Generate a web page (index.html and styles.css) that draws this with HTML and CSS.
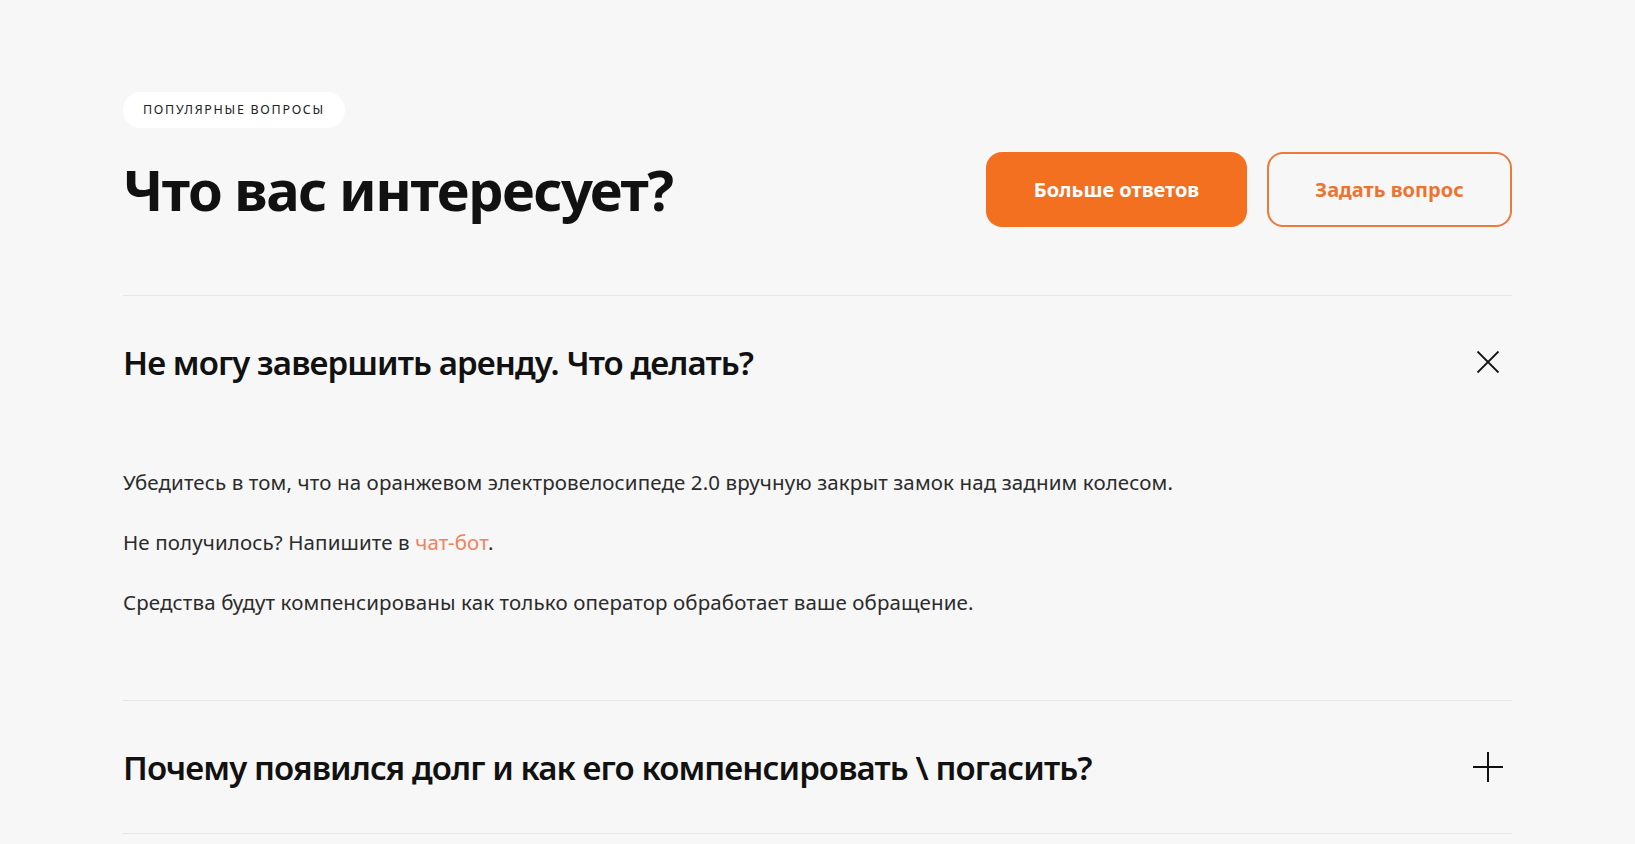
FILE: index.html
```html
<!DOCTYPE html>
<html lang="ru">
<head>
    <meta charset="UTF-8">
    <meta name="viewport" content="width=device-width, initial-scale=1.0">
    <title>Популярные вопросы</title>
    <link rel="stylesheet" href="styles.css">
</head>
<body>
    <section class="faq">
        <span class="faq-tag">Популярные вопросы</span>

        <div class="faq-head">
            <h1>Что вас интересует?</h1>
            <div class="faq-actions">
                <a href="#" class="btn btn-primary">Больше ответов</a>
                <a href="#" class="btn btn-outline">Задать вопрос</a>
            </div>
        </div>

        <div class="faq-list">
            <div class="faq-item open">
                <div class="faq-question">
                    <h2>Не могу завершить аренду. Что делать?</h2>
                    <button class="faq-toggle" aria-label="Свернуть">
                        <svg viewBox="0 0 30 30" width="30" height="30">
                            <path d="M15 0v30M0 15h30" stroke="#111" stroke-width="2" fill="none"/>
                        </svg>
                    </button>
                </div>
                <div class="faq-answer">
                    <p>Убедитесь в том, что на оранжевом электровелосипеде 2.0 вручную закрыт замок над задним колесом.</p>
                    <p>Не получилось? Напишите в <a href="#">чат-бот</a>.</p>
                    <p>Средства будут компенсированы как только оператор обработает ваше обращение.</p>
                </div>
            </div>

            <div class="faq-item">
                <div class="faq-question">
                    <h2>Почему появился долг и как его компенсировать \ погасить?</h2>
                    <button class="faq-toggle" aria-label="Развернуть">
                        <svg viewBox="0 0 30 30" width="30" height="30">
                            <path d="M15 0v30M0 15h30" stroke="#111" stroke-width="2" fill="none"/>
                        </svg>
                    </button>
                </div>
            </div>
        </div>
    </section>
</body>
</html>
```
FILE: styles.css
```css
body {
    font-family: 'Noto Sans', 'Open Sans', sans-serif;
    background-color: #f7f7f7;
    color: #111;
    margin: 0;
    padding: 0;
}

.faq {
    max-width: 1389px;
    margin: 0 auto;
    padding-top: 92px;
}

.faq-tag {
    display: inline-block;
    background-color: #fff;
    border-radius: 18px;
    padding: 0 20px;
    height: 36px;
    line-height: 36px;
    font-size: 12.5px;
    letter-spacing: 1.7px;
    text-transform: uppercase;
    color: #222;
}

.faq-head {
    display: flex;
    align-items: center;
    justify-content: space-between;
    margin-top: 24px;
    padding-bottom: 68px;
    border-bottom: 1px solid #e6e6e6;
}

.faq-head h1 {
    margin: 0;
    font-size: 56px;
    font-weight: 700;
    letter-spacing: -1.5px;
    line-height: 1.1;
}

.faq-actions {
    display: flex;
    gap: 20px;
}

.btn {
    display: flex;
    align-items: center;
    justify-content: center;
    box-sizing: border-box;
    height: 75px;
    border-radius: 16px;
    font-size: 20px;
    font-weight: 700;
    text-decoration: none;
}

.btn-primary {
    width: 261px;
    background-color: #f37021;
    color: #fff;
}

.btn-outline {
    width: 245px;
    border: 2px solid #ec7a3a;
    color: #ec7433;
}

.faq-item {
    border-bottom: 1px solid #e6e6e6;
}

.faq-question {
    display: flex;
    align-items: center;
    justify-content: space-between;
    padding: 42px 0;
}

.faq-question h2 {
    margin: 0;
    font-size: 33px;
    font-weight: 600;
    letter-spacing: -0.9px;
}

.faq-toggle {
    width: 48px;
    height: 48px;
    padding: 0;
    border: none;
    background: none;
    display: flex;
    align-items: center;
    justify-content: center;
    cursor: pointer;
}

.faq-item.open .faq-toggle svg {
    transform: rotate(45deg);
}

.faq-answer {
    padding: 39px 0 53px;
}

.faq-answer p {
    margin: 0 0 30px;
    font-size: 20.5px;
    line-height: 30px;
    letter-spacing: 0.12px;
    color: #2b2b2b;
}

.faq-answer a {
    color: #f0825f;
    text-decoration: none;
}
```
